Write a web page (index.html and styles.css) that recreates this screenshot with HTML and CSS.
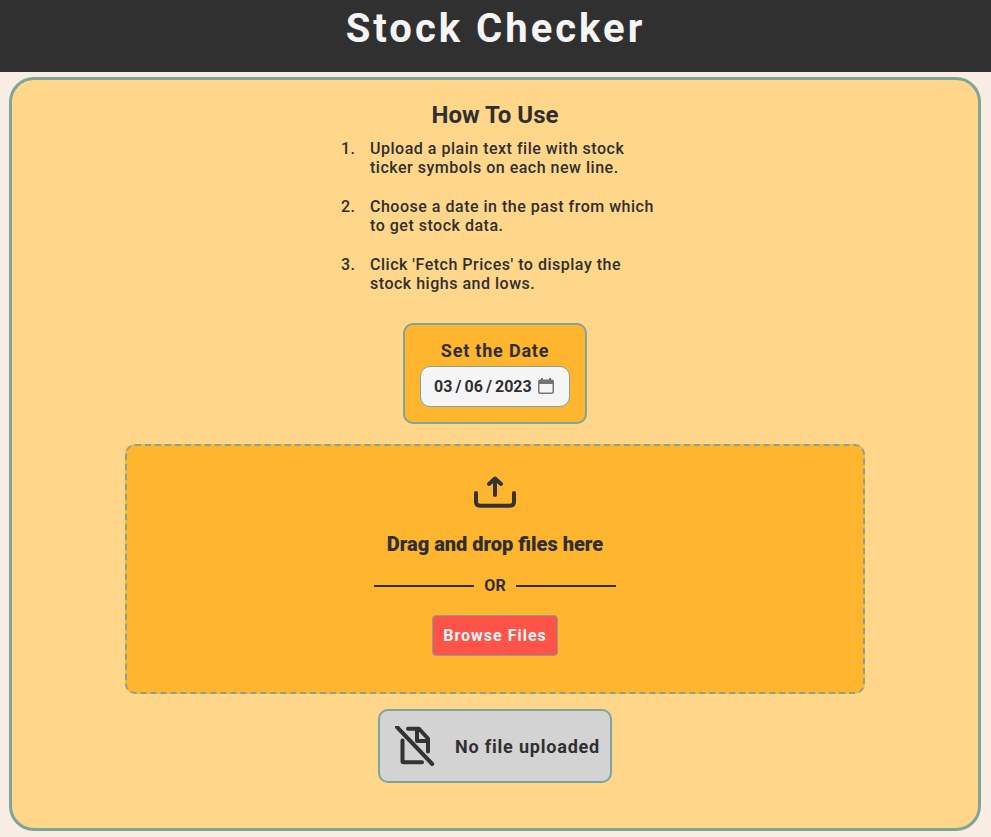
FILE: index.html
```html
<!DOCTYPE html>
<html lang="en">
<head>
<meta charset="utf-8">
<title>Stock Checker</title>
<link rel="stylesheet" href="styles.css">
</head>
<body>
<header><h1>Stock Checker</h1></header>
<main>
  <h2>How To Use</h2>
  <ol>
    <li><span>1.</span><p>Upload a plain text file with stock<br>ticker symbols on each new line.</p></li>
    <li><span>2.</span><p>Choose a date in the past from which<br>to get stock data.</p></li>
    <li><span>3.</span><p>Click 'Fetch Prices' to display the<br>stock highs and lows.</p></li>
  </ol>
  <section class="date-card">
    <label>Set the Date</label>
    <div class="date-field">
      <span class="date-value"><span>03</span><span>/</span><span>06</span><span>/</span><span>2023</span></span>
      <svg class="calendar" width="16" height="16" viewBox="0 0 16 16"><rect x=".75" y="2.25" width="14.5" height="13" rx="1.2" fill="none" stroke="#777" stroke-width="1.5"/><path d="M1 2h14v4H1zM3 0h2v3H3zM11 0h2v3h-2z" fill="#737373"/></svg>
    </div>
  </section>
  <section class="drop-zone">
    <svg class="upload" width="42" height="32" viewBox="0 0 42 32" fill="none" stroke="#333" stroke-width="4" stroke-linecap="round" stroke-linejoin="round"><path d="M2 17v9q0 3.7 4 3.7h30q4 0 4-3.7v-9M21 19V3.5M15 8l6-5.5L27 8"/></svg>
    <h3>Drag and drop files here</h3>
    <div class="divider"><i></i><span>OR</span><i></i></div>
    <button>Browse Files</button>
  </section>
  <section class="file-status">
    <svg class="no-file" width="40" height="40" viewBox="0 0 40 40" fill="none" stroke="#333" stroke-width="4" stroke-linecap="round" stroke-linejoin="round"><path d="M7.5 14.5v21q0 .8.8.8H27M13 2.8H24l9 9.7v13M22 4v11h11"/><path d="M2 1l35.2 37"/></svg>
    <span>No file uploaded</span>
  </section>
</main>
</body>
</html>
```
FILE: styles.css
```css
* { box-sizing: border-box; }
body { margin: 0; background: #f8ede3; color: #2f2f2f; font-family: Roboto, sans-serif; height: 837px; overflow: hidden; }
h1, h2, h3, p, ol { margin: 0; padding: 0; }
header { height: 72px; background: #303030; color: #f5f5f5; text-align: center; padding-top: 5px; }
h1 { font-size: 40px; line-height: 47px; letter-spacing: 3px; }
main { margin: 5px 10px 0 9px; height: 754px; border: 3px solid #7fa59b; border-radius: 25px; background: #ffd68a; display: flex; flex-direction: column; align-items: center; padding-top: 21px; }
h2 { font-size: 24px; line-height: 28px; }
ol { list-style: none; width: 308px; margin-top: 10px; font-size: 16px; font-weight: 500; line-height: 19px; letter-spacing: .51px; }
li { display: flex; margin-bottom: 20px; white-space: nowrap; }
li span { width: 29px; flex: none; }
.date-card { width: 184px; height: 101px; margin-top: 10px; border: 2px solid #7fa59b; border-radius: 10px; background: #ffb52e; display: flex; flex-direction: column; align-items: center; padding-top: 15px; }
.date-card label { font-size: 18px; line-height: 21px; font-weight: 700; letter-spacing: .8px; }
.date-field { width: 150px; height: 41px; margin-top: 5px; border: 1px solid #7fa59b; border-radius: 10px; background: #f5f5f5; display: flex; align-items: center; padding-left: 13px; font-size: 16px; font-weight: 700; }
.date-value { display: flex; gap: 3.1px; width: 104px; }
.calendar { margin-bottom: 2px; }
.drop-zone { width: 740px; height: 250px; margin-top: 20px; border: 2px dashed #7fa59b; border-radius: 10px; background: #ffb52e; display: flex; flex-direction: column; align-items: center; padding-top: 30px; }
h3 { font-size: 20px; font-weight: 900; line-height: 23px; margin-top: 25px; }
.divider { display: flex; align-items: center; justify-content: space-between; width: 242px; margin-top: 20px; font-weight: 700; line-height: 19px; }
.divider i { width: 100px; height: 2px; background: #2f2f2f; }
button { width: 126px; height: 41px; margin-top: 20px; padding: 0; border: 1px solid #7fa59b; border-radius: 4px; background: #ff5349; color: #f5f5f5; font: 700 16px Roboto, sans-serif; letter-spacing: 1px; }
.file-status { width: 234px; height: 74px; margin-top: 15px; border: 2px solid #7fa59b; border-radius: 10px; background: #d3d3d3; display: flex; align-items: center; gap: 20px; padding-left: 15px; font-size: 18px; font-weight: 700; letter-spacing: .8px; white-space: nowrap; }
```
